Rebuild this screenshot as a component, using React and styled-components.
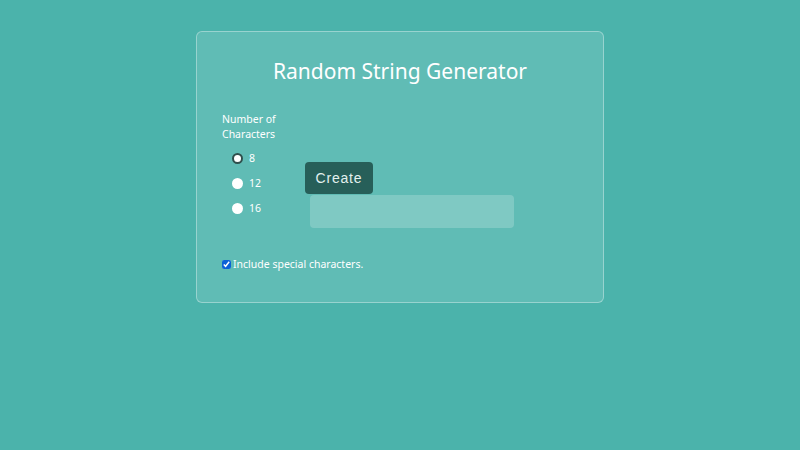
import React, { useState } from "react";
import styled, { createGlobalStyle } from "styled-components";

const GlobalStyle = createGlobalStyle`
  html, body {
    margin: 0;
    padding: 0;
    background: #4bb3ab;
    font-family: "Noto Sans", "Open Sans", sans-serif;
    color: #ffffff;
  }
`;

export default function App() {
  const [size, setSize] = useState("8");
  const [special, setSpecial] = useState(true);

  return (
    <>
      <GlobalStyle />
      <Page>
        <Card>
          <Title>Random String Generator</Title>
          <Body>
            <Options>
              <Label>Number of Characters</Label>
              <RadioList>
                {["8", "12", "16"].map((n) => (
                  <RadioRow key={n}>
                    <Radio
                      type="radio"
                      name="size"
                      checked={size === n}
                      onChange={() => setSize(n)}
                    />
                    {n}
                  </RadioRow>
                ))}
              </RadioList>
            </Options>
            <Action>
              <Button>Create</Button>
              <Output />
            </Action>
          </Body>
          <Check>
            <Box
              type="checkbox"
              checked={special}
              onChange={() => setSpecial(!special)}
            />
            Include special characters.
          </Check>
        </Card>
      </Page>
    </>
  );
}

const Page = styled.div`
  width: 800px;
  height: 450px;
  padding-top: 31px;
  box-sizing: border-box;
`;

const Card = styled.div`
  width: 408px;
  height: 272px;
  margin: 0 auto;
  box-sizing: border-box;
  background: rgba(255, 255, 255, 0.12);
  border: 1px solid rgba(255, 255, 255, 0.35);
  border-radius: 6px;
  padding: 24px 25px 0;
`;

const Title = styled.h1`
  margin: 0;
  text-align: center;
  font-size: 21px;
  font-weight: 400;
  line-height: 30px;
`;

const Body = styled.div`
  display: flex;
  margin-top: 26px;
`;

const Options = styled.div`
  width: 58px;
`;

const Label = styled.div`
  font-size: 10.5px;
  line-height: 15px;
`;

const RadioList = styled.div`
  display: flex;
  flex-direction: column;
  gap: 11px;
  margin-top: 9px;
  padding-left: 10px;
`;

const RadioRow = styled.label`
  display: flex;
  align-items: center;
  gap: 6px;
  font-size: 10.5px;
  line-height: 14px;
`;

const Radio = styled.input`
  appearance: none;
  width: 11px;
  height: 11px;
  margin: 0;
  border-radius: 50%;
  background: #ffffff;
  box-sizing: border-box;

  &:checked {
    border: 2px solid #2f4f4c;
  }
`;

const Action = styled.div`
  display: flex;
  flex-direction: column;
  margin-left: 25px;
  padding-top: 50px;
`;

const Button = styled.button`
  align-self: flex-start;
  width: 68px;
  height: 32px;
  border: none;
  border-radius: 4px;
  background: #275f59;
  color: #e3f1ef;
  font-family: "Liberation Sans", Arial, sans-serif;
  font-size: 14px;
  letter-spacing: 0.8px;
`;

const Output = styled.div`
  width: 204px;
  height: 33px;
  margin: 1px 0 0 5px;
  border-radius: 4px;
  background: rgba(255, 255, 255, 0.2);
`;

const Check = styled.label`
  display: flex;
  align-items: center;
  margin-top: 29px;
  font-size: 10.5px;
  line-height: 14px;
`;

const Box = styled.input`
  width: 9px;
  height: 9px;
  margin: 0 2px 0 0;
  accent-color: #0b62d6;
`;
